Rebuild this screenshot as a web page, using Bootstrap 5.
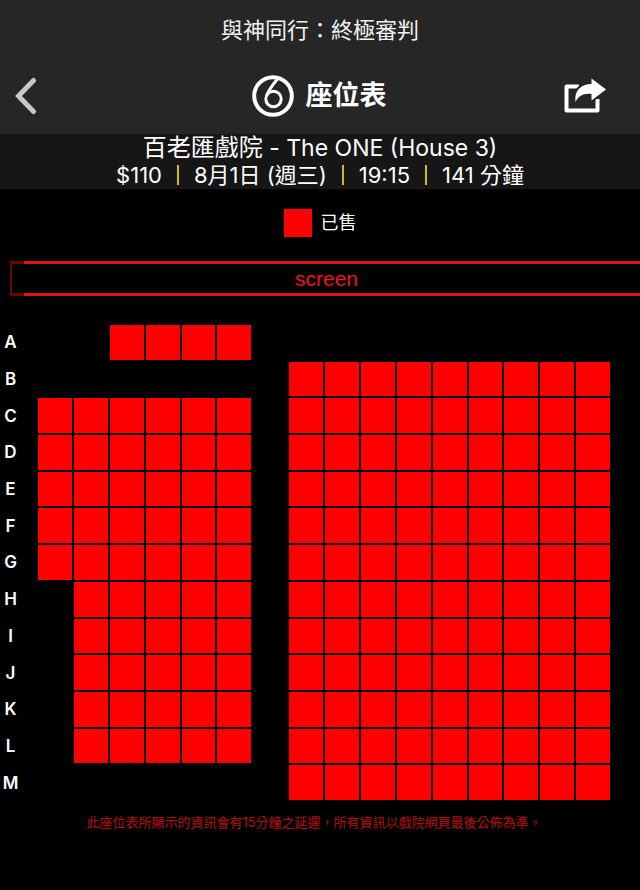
<!DOCTYPE html>
<html lang="zh-Hant">
<head>
<meta charset="utf-8">
<meta name="viewport" content="width=device-width, initial-scale=1">
<title>座位表</title>
<link href="https://cdn.jsdelivr.net/npm/bootstrap@5.3.0/dist/css/bootstrap.min.css" rel="stylesheet">
<style>
  body { background: #000; color: #fff; font-family: Inter, "Noto Sans CJK TC", sans-serif; }
  .app-header { background: #262626; }
  .film-title { font-size: 22px; line-height: 32px; padding-top: 14px; color: #f2f2f2; }
  .title-bar { display: grid; grid-template-columns: 1fr auto 1fr; height: 76px; margin-top: 12px; padding: 0 34px 0 14px; }
  .title-bar button { line-height: 0; }
  .brand { margin-left: 18px; }
  .page-title { font-size: 27px; line-height: 40px; }
  .show-info { background: #161616; font-size: 22px; line-height: 28px; }
  .show-facts { gap: 15px; line-height: 26px; padding-bottom: 1px; }
  .venue { font-size: 23px; line-height: 28px; }
  .venue .han { font-size: 24px; }
  .bar { width: 2px; height: 20px; background: #d9b51c; }
  .legend { margin-top: 20px; gap: 9px; font-size: 18px; line-height: 28px; }
  .swatch { width: 28px; height: 28px; background: #f00; }
  .screen-box { margin: 24px 0 0 10px; height: 35px; border: 3px solid #7a0808; border-right: 0;
    border-image: linear-gradient(to right, #6a0505 15px, #e01414 15px) 3;
    border-image-width: 3px 0 3px 2px; color: #f01414;
    font: 21px/29px "Liberation Sans", Arial, sans-serif; }
  .seat-map { margin: 29px 30px 0 0; display: grid; aspect-ratio: 610 / 475;
    grid-template-columns: 36px repeat(16, minmax(0, 1fr)); grid-template-rows: repeat(13, minmax(0, 1fr));
    gap: 2px; }
  .row-name { width: 21px; font-size: 17px; line-height: 20px; font-weight: 600; }
  .seat { background: #f00; }
  .note { margin: 12px 0 0; padding-right: 12px; font-size: 13px; line-height: 20px; color: #b80c0c; }
</style>
<script src="https://cdn.jsdelivr.net/npm/bootstrap@5.3.0/dist/js/bootstrap.bundle.min.js"></script>
</head>
<body>
<header class="app-header">
  <div class="film-title text-center">與神同行：終極審判</div>
  <div class="title-bar align-items-center">
    <button type="button" class="btn p-0 border-0 justify-self-start text-start" aria-label="返回">
      <svg width="24" height="38" viewBox="0 0 24 38" fill="none" stroke="#c8c8c8" stroke-width="5" stroke-linecap="round" stroke-linejoin="miter"><path d="M19.500 3.500 4.500 19 19.500 34.500"/></svg>
    </button>
    <div class="brand d-flex align-items-center gap-2">
      <svg class="me-1" width="42" height="42" viewBox="0 0 42 42" fill="none" stroke="#fff" aria-hidden="true"><circle cx="21" cy="21" r="18.800" stroke-width="4"/><circle cx="21.500" cy="24" r="7.700" stroke-width="3"/><path d="M25.500 4 Q17 14 14.500 21" stroke-width="3"/></svg>
      <h1 class="page-title fw-bold m-0">座位表</h1>
    </div>
    <button type="button" class="btn p-0 border-0 text-end" aria-label="分享">
      <svg width="42" height="36" viewBox="0 0 42 36"><path d="M15 8.500H2.500V32.500H33.500V21" fill="none" stroke="#fff" stroke-width="4" stroke-linejoin="round"/><path d="M11.500 24C10 12.500 17 6 27.500 6V.500L42 11.500 27.500 22.500V16C19 15 14.500 18 11.500 24Z" fill="#fff" stroke="#262626" stroke-width="4" paint-order="stroke" stroke-linejoin="round"/></svg>
    </button>
  </div>
</header>
<section class="show-info text-center">
  <div class="venue"><span class="han">百老匯戲院</span> - The ONE (House 3)</div>
  <div class="show-facts d-flex justify-content-center align-items-center">
    <span>$110</span><span class="bar"></span><span>8月1日 (週三)</span><span class="bar"></span><span>19:15</span><span class="bar"></span><span>141 分鐘</span>
  </div>
</section>
<main>
  <div class="legend d-flex justify-content-center align-items-center"><span class="swatch"></span><span>已售</span></div>
  <div class="screen-box text-center"><span>screen</span></div>
  <div class="seat-map" id="seatMap"></div>
  <p class="note text-center">此座位表所顯示的資訊會有15分鐘之延遲，所有資訊以戲院網頁最後公佈為準。</p>
</main>
<script>
  // Each row: name, then 16 places; "x" is a sold seat, "." is an aisle or empty place.
  const left = { A: '..xxxx', B: '......', M: '......' };
  const map = document.getElementById('seatMap');
  for (const name of 'ABCDEFGHIJKLM') {
    const plan = (left[name] || ('CDEFG'.includes(name) ? 'xxxxxx' : '.xxxxx'))
      + '.' + (name === 'A' ? '.........' : 'xxxxxxxxx');
    const label = document.createElement('div');
    label.className = 'row-name text-center align-self-center';
    label.textContent = name;
    map.append(label);
    for (const place of plan) {
      const cell = document.createElement('div');
      if (place === 'x') cell.className = 'seat';
      map.append(cell);
    }
  }
</script>
</body>
</html>
